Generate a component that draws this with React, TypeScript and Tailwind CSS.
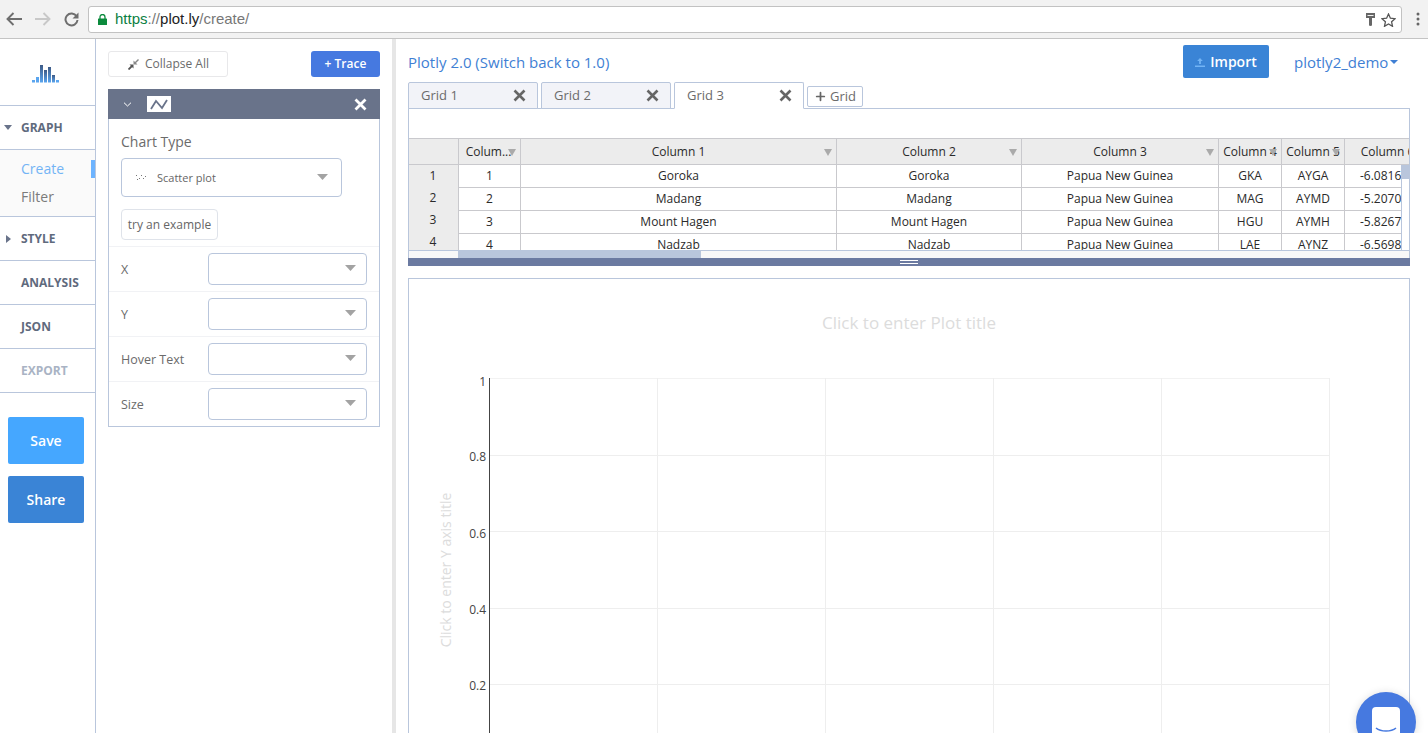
import React from "react";
import { Plus } from "lucide-react";

const Caret = ({ className = "" }: { className?: string }) => (
  <svg width="11" height="6" viewBox="0 0 11 6" className={className}><path d="M0 0h11L5.500 6z" fill="#a3a3a3" /></svg>
);

const FieldSelect = () => (
  <div className="w-[159px] h-[32px] border border-[#b9c6dc] rounded-[4px] flex items-center justify-end pr-[10px] bg-white">
    <Caret className="-mt-[2px]" />
  </div>
);

const Field = ({ label }: { label: string }) => (
  <div className="h-[45px] flex items-center justify-between px-[12px] text-[12.5px] text-[#6b6b6b] border-t border-[#f1f2f5]">
    <span className="pt-[2px]">{label}</span>
    <FieldSelect />
  </div>
);

const NavRow = ({ label, arrow, muted }: { label: string; arrow?: "down" | "right"; muted?: boolean }) => (
  <div className={`h-[44px] border-b border-[#b9c6dc] flex items-center pl-[21px] relative text-[12px] font-bold ${muted ? "text-[#a9b3c4]" : "text-[#5f6a7d]"}`}>
    {arrow === "down" && (
      <svg width="8" height="5" viewBox="0 0 8 5" className="absolute left-[4px] top-[19px]"><path d="M0 0h8L4 5z" fill="#69738a" /></svg>
    )}
    {arrow === "right" && (
      <svg width="5" height="8" viewBox="0 0 5 8" className="absolute left-[6px] top-[18px]"><path d="M0 0l5 4-5 4z" fill="#69738a" /></svg>
    )}
    {label}
  </div>
);

const Tab = ({ label, active }: { label: string; active?: boolean }) => (
  <div className={`w-[130px] h-[27px] border border-[#b9c6dc] rounded-t-[2px] flex items-center justify-between pl-[12px] pr-[11px] text-[13px] text-[#6b6b6b] ${active ? "bg-white border-b-white" : "bg-[#f2f3f8]"}`}>
    <span>{label}</span>
    <svg width="13" height="13" viewBox="0 0 13 13"><path d="M1.500 1.500l10 10M11.500 1.500l-10 10" stroke="#666" strokeWidth="2.600" /></svg>
  </div>
);

const widths = [62, 316, 185, 197, 63, 63, 86];
const headers = ["Colum...", "Column 1", "Column 2", "Column 3", "Column 4", "Column 5", "Column 6"];
const rows = [
  ["1", "Goroka", "Goroka", "Papua New Guinea", "GKA", "AYGA", "-6.081689"],
  ["2", "Madang", "Madang", "Papua New Guinea", "MAG", "AYMD", "-5.207083"],
  ["3", "Mount Hagen", "Mount Hagen", "Papua New Guinea", "HGU", "AYMH", "-5.826789"],
  ["4", "Nadzab", "Nadzab", "Papua New Guinea", "LAE", "AYNZ", "-6.569828"],
];

const HeadArrow = () => (
  <svg width="8" height="7" viewBox="0 0 8 7" className="absolute top-[10px] right-[4px]"><path d="M0 0h8L4 7z" fill="#aaa" /></svg>
);

const Chart = () => {
  const ys = [455.5, 531.5, 608.5, 684.5].map((y) => y - 279);
  const xs = [657.5, 825.5, 993.5, 1161.5, 1329.5].map((x) => x - 409);
  const ticks = [["1", 107], ["0.8", 182], ["0.6", 259], ["0.4", 335], ["0.2", 411]] as const;
  return (
    <svg width="1000" height="460" viewBox="0 0 1000 460" className="block" fontFamily="'Open Sans', sans-serif">
      <text x="500" y="50" textAnchor="middle" fontSize="17" fill="#dcdcdc">Click to enter Plot title</text>
      <line x1="81" x2="920" y1="99.5" y2="99.5" stroke="#f2f2f2" />
      {ys.map((y) => <line key={y} x1="81" x2="920" y1={y} y2={y} stroke="#eee" />)}
      {xs.map((x) => <line key={x} x1={x} x2={x} y1="99" y2="460" stroke="#eee" />)}
      <line x1="80.5" x2="80.5" y1="99" y2="460" stroke="#444" />
      {ticks.map(([t, y]) => (
        <text key={t} x="77" y={y} textAnchor="end" fontSize="12" fill="#444">{t}</text>
      ))}
      <text transform="translate(42 291) rotate(-90)" textAnchor="middle" fontSize="14" fill="#dcdcdc">Click to enter Y axis title</text>
    </svg>
  );
};

const logoBars = [
  [0, 15], [4, 12], [8, 0], [12, 5], [16, 2], [20, 10], [24, 15],
];

export default function App() {
  return (
    <div className="w-[1428px] h-[733px] overflow-hidden relative flex flex-col bg-white font-['Open_Sans',sans-serif]">
      {/* browser bar */}
      <div className="h-[39px] shrink-0 bg-[#f2f2f2] border-b border-[#c4c4c4] flex items-center">
        <div className="w-[88px] flex items-center pl-[6px] gap-[13px] shrink-0">
          <svg width="16" height="14" viewBox="0 0 16 14"><path d="M16 7H2M7.500 1L1.500 7l6 6" stroke="#6e6e6e" strokeWidth="1.900" fill="none" /></svg>
          <svg width="16" height="14" viewBox="0 0 16 14"><path d="M0 7h14M8.500 1l6 6-6 6" stroke="#c8c8c8" strokeWidth="1.900" fill="none" /></svg>
          <svg width="15" height="15" viewBox="0 0 15 15"><path d="M12.600 4.200A6 6 0 1 0 13.500 8" stroke="#6e6e6e" strokeWidth="2" fill="none" /><path d="M14.500 0.500v6h-6z" fill="#6e6e6e" /></svg>
        </div>
        <div className="w-[1314px] h-[27px] mt-[1px] bg-white border border-[#c2c2c2] rounded-[3px] flex items-center pl-[9px] pr-[5px] font-['Liberation_Sans',sans-serif] text-[15px]">
          <svg width="9" height="11" viewBox="0 0 9 11">
            <path d="M2 5V3a2.500 2.500 0 0 1 5 0v2" stroke="#0b8a3c" strokeWidth="1.300" fill="none" />
            <rect x="0" y="4.500" width="9" height="6.500" rx="0.600" fill="#0b8a3c" />
          </svg>
          <span className="ml-[8px] text-[#0b8043]">https</span>
          <span className="text-[#777]">://</span>
          <span className="text-[#222]">plot.ly</span>
          <span className="text-[#777]">/create/</span>
          <div className="ml-auto flex items-center gap-[6px]">
            <svg width="9" height="13" viewBox="0 0 9 13"><path d="M0 0h9v5H6v7.500L4.500 13 3 12.500V5H0z" fill="#666" /><rect x="1.500" y="2" width="6" height="1" fill="#f2f2f2" /></svg>
            <svg width="15" height="14" viewBox="0 0 15 14"><path d="M7.500 1l1.900 4.200 4.600.5-3.400 3.100.9 4.500-4-2.300-4 2.300.9-4.500L1 5.700l4.600-.5z" stroke="#555" strokeWidth="1.300" fill="none" /></svg>
          </div>
        </div>
        <svg width="4" height="14" viewBox="0 0 4 14" className="ml-[14px]"><g fill="#666"><rect x="0.500" y="0.500" width="3" height="3" rx="1.500" /><rect x="0.500" y="5.500" width="3" height="3" rx="1.500" /><rect x="0.500" y="10.500" width="3" height="3" rx="1.500" /></g></svg>
      </div>

      <div className="flex-1 flex min-h-0">
        {/* left nav */}
        <div className="w-[96px] shrink-0 border-r border-[#b9c6dc]">
          <div className="h-[67px] border-b border-[#b9c6dc] flex items-center justify-center pr-[4px] pt-[3px]">
            <svg width="27" height="18" viewBox="0 0 27 18">
              <defs>
                <linearGradient id="lg" x1="0" y1="0" x2="0" y2="1">
                  <stop offset="0" stopColor="#3d5a86" />
                  <stop offset="1" stopColor="#5aa5ef" />
                </linearGradient>
              </defs>
              {logoBars.map(([x, y]) => (
                <rect key={x} x={x} y={y} width="3" height={17.5 - y} fill={y >= 12 ? "#5aa5ef" : "url(#lg)"} />
              ))}
            </svg>
          </div>
          <NavRow label="GRAPH" arrow="down" />
          <div className="h-[67px] border-b border-[#b9c6dc] bg-[#fafafa] relative pl-[21px] pt-[5px] text-[14px] leading-[28px]">
            <div className="text-[#73b4f5]">Create</div>
            <div className="text-[#7b7b7b]">Filter</div>
            <div className="absolute right-0 top-[10px] w-[4px] h-[18px] bg-[#6db4ff]" />
          </div>
          <NavRow label="STYLE" arrow="right" />
          <NavRow label="ANALYSIS" />
          <NavRow label="JSON" />
          <NavRow label="EXPORT" muted />
          <div className="pl-[8px] pt-[24px] flex flex-col gap-[12px]">
            <div className="w-[76px] h-[47px] rounded-[2px] bg-[#45a7ff] text-white font-semibold text-[14px] flex items-center justify-center">Save</div>
            <div className="w-[76px] h-[47px] rounded-[2px] bg-[#3a84d6] text-white font-semibold text-[14px] flex items-center justify-center">Share</div>
          </div>
        </div>

        {/* trace panel */}
        <div className="w-[296px] shrink-0 px-[12px] pt-[12px]">
          <div className="flex justify-between h-[26px]">
            <div className="w-[120px] border border-[#e8e8ea] rounded-[3px] flex items-center justify-center gap-[6px] pl-[1px] text-[12px] text-[#6b6b6b]">
              <svg width="11" height="11" viewBox="0 0 11 11" className="mt-[1px]">
                <path d="M0.500 10.500L4 7" stroke="#555" strokeWidth="1.800" fill="none" />
                <path d="M1.500 5.500h4v4z" fill="#555" />
                <path d="M10.500 0.500L7 4" stroke="#888" strokeWidth="1.400" fill="none" />
                <path d="M5.500 1.500v4h4z" fill="#888" />
              </svg>
              <span>Collapse All</span>
            </div>
            <div className="w-[69px] bg-[#4679e0] rounded-[3px] text-white text-[12px] font-semibold flex items-center justify-center">+ Trace</div>
          </div>
          <div className="mt-[12px] w-[272px] border-x border-b border-[#b9c6dc]">
            <div className="-mx-px h-[30px] bg-[#69738a] flex items-center pl-[15px] pr-[13px]">
              <svg width="9" height="5" viewBox="0 0 9 5"><path d="M1 .7l3.500 3.300L8 .7" stroke="#fff" strokeWidth="1" fill="none" /></svg>
              <div className="ml-[15px] w-[24px] h-[16px] bg-white flex items-center justify-center">
                <svg width="18" height="11" viewBox="0 0 18 11"><path d="M1 10L6 2l6 7 5-8" stroke="#69738a" strokeWidth="1.800" fill="none" /></svg>
              </div>
              <svg width="13" height="13" viewBox="0 0 13 13" className="ml-auto"><path d="M1.500 1.500l10 10M11.500 1.500l-10 10" stroke="#fff" strokeWidth="2.800" /></svg>
            </div>
            <div className="pl-[12px] pt-[13px] h-[127px] text-[#6b6b6b]">
              <div className="text-[14px] leading-[20px]">Chart Type</div>
              <div className="mt-[6px] w-[221px] h-[39px] border border-[#b9c6dc] rounded-[4px] flex items-center px-[13px] text-[11px]">
                <svg width="12" height="8" viewBox="0 0 12 8" className="mr-[10px]">
                  <g fill="#777"><rect x="1" y="1" width="1" height="1" /><rect x="4" y="4" width="1" height="1" /><rect x="6" y="1" width="1" height="1" /><rect x="8" y="4" width="1" height="1" /><rect x="10" y="2" width="1" height="1" /><rect x="2" y="5" width="1" height="1" /></g>
                </svg>
                <span className="text-[#666] pt-[2px]">Scatter plot</span>
                <Caret className="ml-auto -mt-[2px]" />
              </div>
              <div className="mt-[12px] w-[97px] h-[31px] border border-[#dfe3ea] rounded-[4px] flex items-center justify-center text-[12px] text-[#666]">try an example</div>
            </div>
            <Field label="X" />
            <Field label="Y" />
            <Field label="Hover Text" />
            <Field label="Size" />
          </div>
        </div>

        <div className="w-[4px] shrink-0 bg-[#e6e6e6]" />

        {/* main */}
        <div className="flex-1 min-w-0 pl-[12px] pr-[18px] relative">
          <div className="h-[43px] flex items-start pt-[6px]">
            <div className="pt-[6px] text-[15px] text-[#3f7fd4] leading-[22px] whitespace-nowrap">Plotly 2.0 (Switch back to 1.0)</div>
            <div className="ml-auto w-[86px] h-[33px] bg-[#3a84d6] rounded-[2px] text-white font-semibold text-[14px] flex items-center justify-center gap-[5px]">
              <svg width="10" height="10" viewBox="0 0 10 10"><path d="M5 1L2.200 4h1.900v3h1.800V4h1.900zM0 8.600h10V10H0z" fill="#73b4f5" /></svg>
              Import
            </div>
            <div className="ml-[25px] mr-[12px] w-[104px] pt-[6px] text-[15px] text-[#3f7fd4] leading-[22px] flex items-center gap-[2px] whitespace-nowrap">
              plotly2_demo
              <svg width="8" height="4" viewBox="0 0 8 4" className="shrink-0"><path d="M0 0h8L4 4z" fill="#3f7fd4" /></svg>
            </div>
          </div>

          <div className="flex items-end gap-[3px] h-[27px] relative z-10 -mb-px">
            <Tab label="Grid 1" />
            <Tab label="Grid 2" />
            <Tab label="Grid 3" active />
            <div className="mb-[2px] w-[56px] h-[21px] border border-[#b9c6dc] rounded-[2px] flex items-center justify-center gap-[3px] text-[13px] text-[#6b6b6b]">
              <Plus size={13} strokeWidth={3.200} color="#666" />
              Grid
            </div>
          </div>

          <div className="w-[1002px] border-x border-[#b9c6dc] border-t">
            <div className="h-[29px] bg-white" />
            <div className="flex h-[113px] overflow-hidden relative text-[12px] text-[#2a2a2a] border-t border-[#c9c9cd]">
              <div className="w-[50px] shrink-0 bg-[#ececec] border-r border-[#c9c9cd]">
                <div className="h-[26px] border-b border-[#c9c9cd]" />
                {[1, 2, 3, 4].map((n) => (
                  <div key={n} className="h-[22px] flex items-center justify-center pr-[1px]">{n}</div>
                ))}
              </div>
              <div className="flex-1 min-w-0 overflow-hidden">
                <div className="flex h-[26px] bg-[#ececec] border-b border-[#c9c9cd]">
                  {headers.map((h, i) => (
                    <div key={h} style={{ width: widths[i] }} className={`relative shrink-0 flex items-center justify-center border-r border-[#c9c9cd] whitespace-nowrap ${i === 0 ? "pr-[2px]" : ""}`}>
                      {h}
                      {i < 6 && <HeadArrow />}
                    </div>
                  ))}
                </div>
                {rows.map((r) => (
                  <div key={r[0]} className="flex h-[23px] border-b border-[#c9c9cd]">
                    {r.map((c, i) => (
                      <div key={i} style={{ width: widths[i] }} className="shrink-0 flex items-center justify-center border-r border-[#c9c9cd] whitespace-nowrap overflow-hidden">
                        <span className="shrink-0">{c}</span>
                      </div>
                    ))}
                  </div>
                ))}
              </div>
              <div className="absolute right-0 top-[26px] bottom-0 w-[8px] bg-white border-l border-[#b9c6dc]">
                <div className="h-[14px] -ml-px bg-[#b9c6dc]" />
              </div>
            </div>
            <div className="h-[8px] bg-[#f8f8f8] border-t border-[#b9c6dc] relative -mt-px">
              <div className="absolute left-[49px] -top-px h-[8px] w-[243px] bg-[#b9c6dc]" />
            </div>
          </div>
          <div className="w-[1002px] h-[8px] bg-[#6b7aa1] flex items-center justify-center">
            <div className="w-[18px] h-[4px] border-y border-white" />
          </div>

          <div className="mt-[12px] w-[1002px] h-[480px] border border-[#b9c6dc] overflow-hidden">
            <Chart />
          </div>
        </div>
      </div>

      {/* intercom launcher */}
      <div className="absolute left-[1356px] top-[692px] w-[60px] h-[60px] rounded-full bg-[#4679e0] flex items-start justify-center pt-[15px] shadow-[0_1px_8px_rgba(0,0,0,0.15)]">
        <div className="w-[28px] h-[30px] bg-white rounded-[4px] flex items-start justify-center pt-[20px]">
          <svg width="22" height="6" viewBox="0 0 22 6"><path d="M1 1c5 4 15 4 20 0" stroke="#4679e0" strokeWidth="1.600" fill="none" /></svg>
        </div>
      </div>
    </div>
  );
}
